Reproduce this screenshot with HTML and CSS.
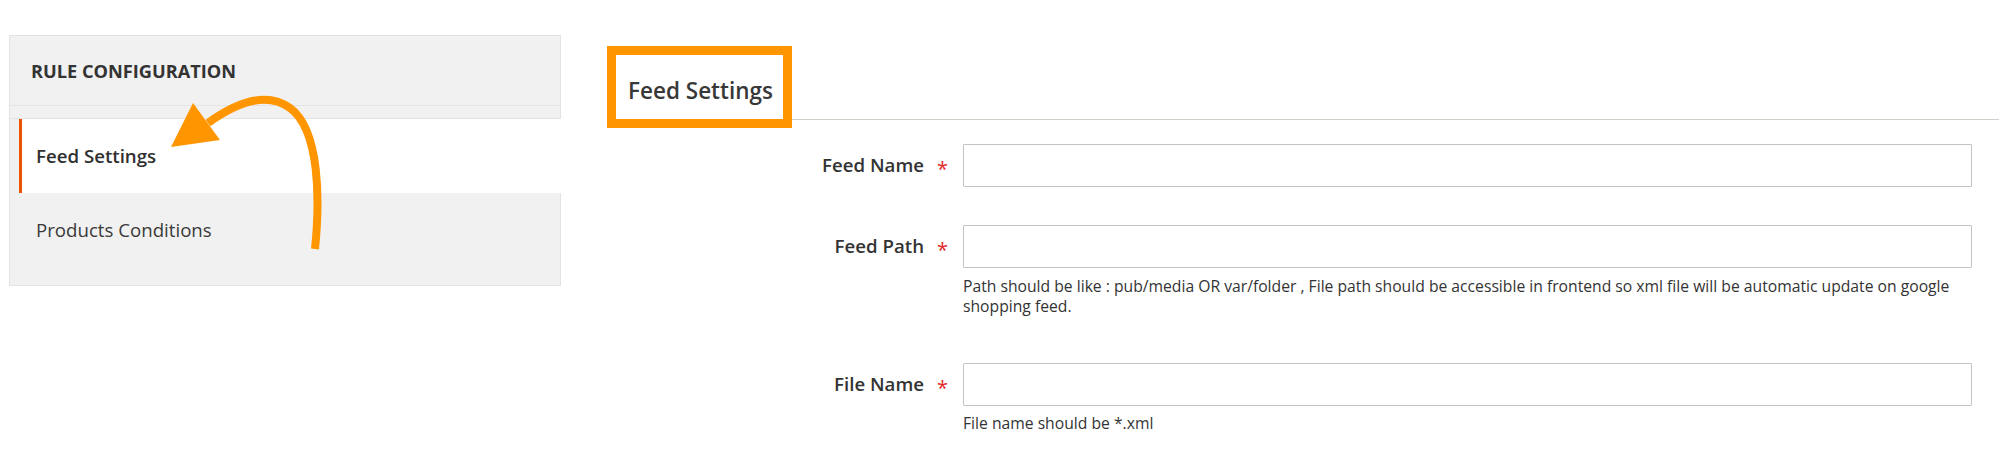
FILE: index.html
```html
<!DOCTYPE html>
<html lang="en">
<head>
<meta charset="utf-8">
<title>Feed Settings</title>
<link rel="stylesheet" href="styles.css">
</head>
<body>
<div class="page">
  <aside class="nav">
    <div class="nav-title">Rule Configuration</div>
    <ul class="nav-items">
      <li class="nav-item active"><a class="nav-link">Feed Settings</a></li>
      <li class="nav-item"><a class="nav-link">Products Conditions</a></li>
    </ul>
  </aside>
  <main class="content">
    <h2 class="legend">Feed Settings</h2>
    <div class="fields">
      <div class="field">
        <label class="field-label">Feed Name</label>
        <div class="control"><input class="input" type="text"></div>
      </div>
      <div class="field">
        <label class="field-label">Feed Path</label>
        <div class="control">
          <input class="input" type="text">
          <div class="note">Path should be like : pub/media OR var/folder , File path should be accessible in frontend so xml file will be automatic update on google shopping feed.</div>
        </div>
      </div>
      <div class="field">
        <label class="field-label">File Name</label>
        <div class="control">
          <input class="input" type="text">
          <div class="note">File name should be *.xml</div>
        </div>
      </div>
    </div>
  </main>
</div>
<div class="callout-box"></div>
<svg class="callout-arrow" width="400" height="300" viewBox="0 0 400 300" aria-hidden="true">
  <path d="M315 249 C320 200 320 130 290 108 C268 92 240 100 208 123" fill="none" stroke="#ff9600" stroke-width="8"/>
  <polygon points="193,103 220,140 171,147" fill="#ff9600"/>
</svg>
</body>
</html>
```

FILE: styles.css
```css
html, body {
  margin: 0;
  padding: 0;
  background: #ffffff;
}

body {
  font-family: "Open Sans", "Liberation Sans", sans-serif;
  color: #303030;
  position: relative;
  min-height: 459px;
  overflow: hidden;
}

.page {
  display: flex;
  align-items: flex-start;
}

/* Sidebar navigation */
.nav {
  margin: 35px 0 0 9px;
  width: 552px;
  flex: none;
  box-sizing: border-box;
  background: #f1f1f1;
  border: 1px solid #e3e3e3;
}

.nav-title {
  padding: 23.5px 21px 23.1px;
  font-size: 18.2px;
  line-height: 22.4px;
  font-weight: 700;
  text-transform: uppercase;
  color: #333333;
  border-bottom: 1px solid #e3e3e3;
}

.nav-items {
  list-style: none;
  margin: 12px -1px 0 0;
  padding: 0 0 18px;
  border-top: 1px solid #e3e3e3;
}

.nav-item {
  margin-left: 9px;
  border-left: 3px solid transparent;
}

.nav-item.active {
  background: #ffffff;
  border-left-color: #eb5202;
}

.nav-link {
  display: block;
  padding: 25.5px 14px 26.1px;
  font-size: 18.67px;
  line-height: 22.4px;
  font-weight: 400;
  color: #3a3a3a;
}

.nav-item.active .nav-link {
  font-weight: 600;
  color: #303030;
}

/* Main content */
.content {
  flex: 1;
  margin-left: 66px;
}

.legend {
  margin: 0;
  padding: 77px 0 15px 1px;
  font-size: 22.5px;
  line-height: 27px;
  font-weight: 600;
  color: #383838;
  border-bottom: 1px solid #d2cfc8;
}

.fields {
  padding: 24px 27px 0 0;
}

.field {
  display: grid;
  grid-template-columns: 336px 1fr;
  margin-bottom: 38px;
}

.field-label {
  height: 43px;
  display: flex;
  align-items: center;
  justify-content: flex-end;
  padding-right: 15px;
  font-size: 18.67px;
  line-height: 22.4px;
  font-weight: 600;
  color: #333333;
}

.field-label::after {
  content: "*";
  color: #e22626;
  font-size: 20px;
  line-height: 22.4px;
  font-weight: 400;
  margin-left: 13px;
  margin-top: 8px;
}

.input {
  display: block;
  width: 100%;
  height: 43px;
  box-sizing: border-box;
  margin: 0;
  padding: 0 12px;
  border: 1px solid #c4c4c4;
  border-radius: 1px;
  background: #ffffff;
  font: inherit;
  font-size: 18.67px;
  outline: none;
}

.note {
  margin: 7.5px 0 8px;
  font-size: 15.7px;
  line-height: 20.5px;
  color: #333333;
}

/* Annotation overlays */
.callout-box {
  position: absolute;
  left: 607px;
  top: 46px;
  width: 185px;
  height: 82px;
  box-sizing: border-box;
  border: 9px solid #ff9600;
  pointer-events: none;
}

.callout-arrow {
  position: absolute;
  left: 0;
  top: 0;
  pointer-events: none;
}
```
